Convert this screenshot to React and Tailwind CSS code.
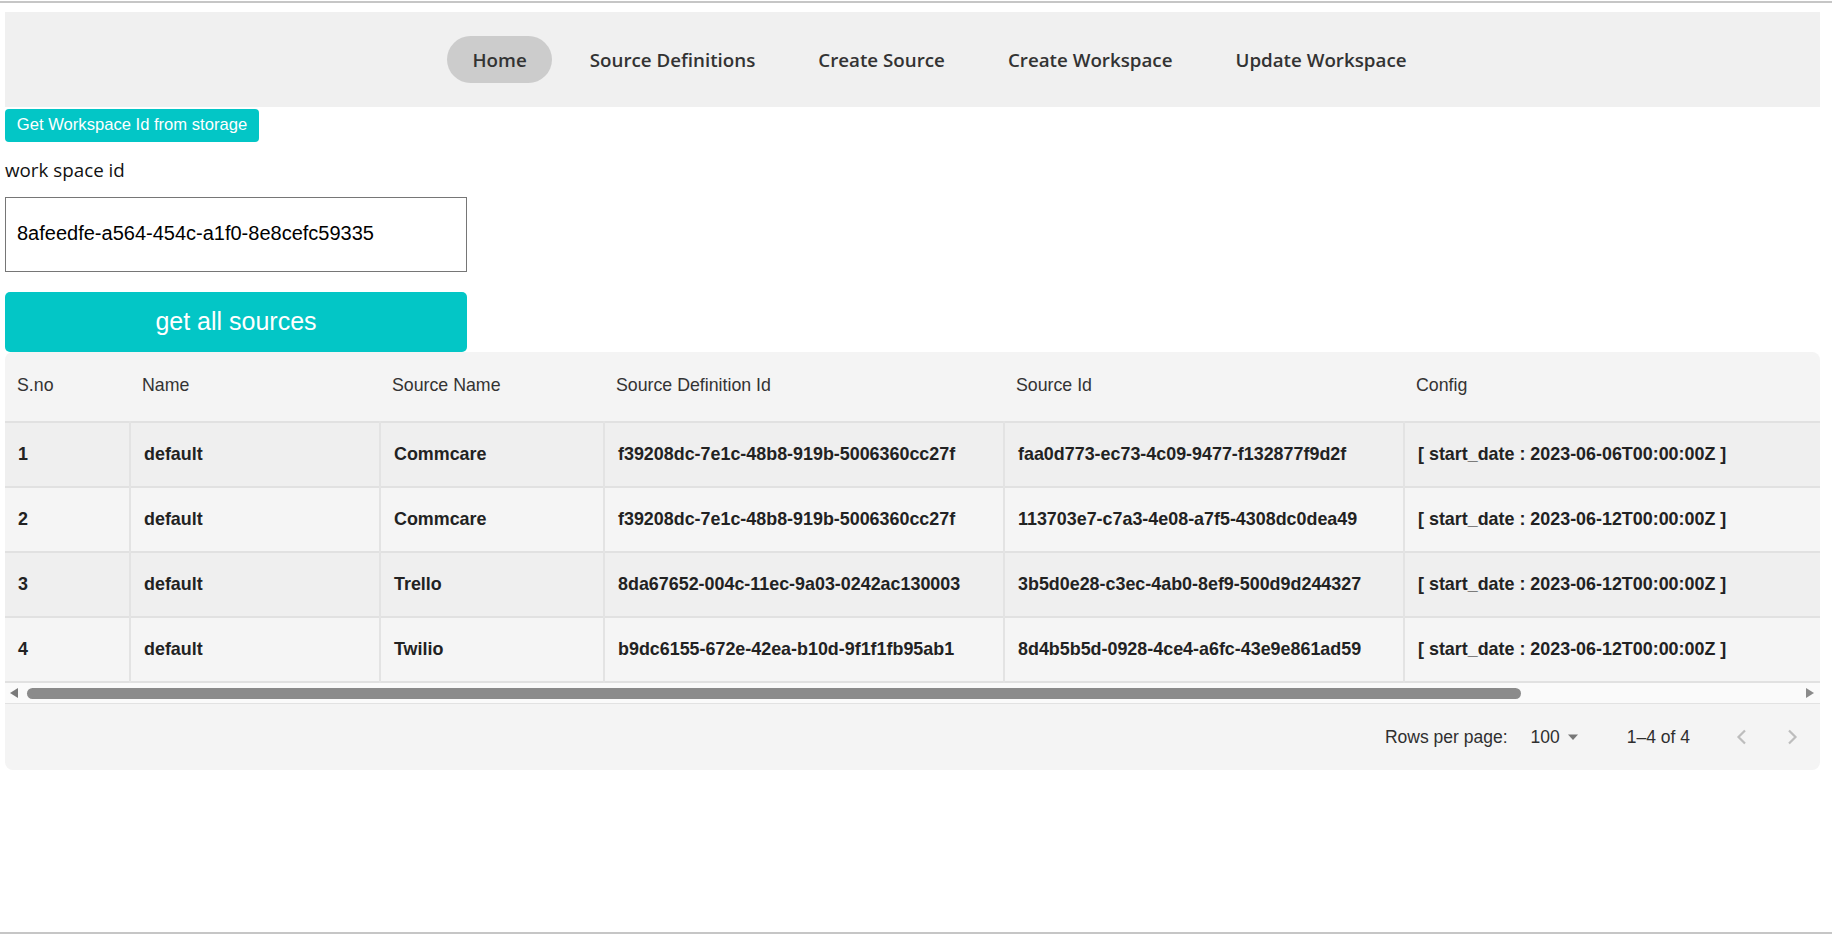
import React from 'react';

const navItems = ['Home', 'Source Definitions', 'Create Source', 'Create Workspace', 'Update Workspace'];

const sources = [
  {
    sno: 1,
    name: 'default',
    sourceName: 'Commcare',
    definitionId: 'f39208dc-7e1c-48b8-919b-5006360cc27f',
    sourceId: 'faa0d773-ec73-4c09-9477-f132877f9d2f',
    config: '[ start_date : 2023-06-06T00:00:00Z ]',
  },
  {
    sno: 2,
    name: 'default',
    sourceName: 'Commcare',
    definitionId: 'f39208dc-7e1c-48b8-919b-5006360cc27f',
    sourceId: '113703e7-c7a3-4e08-a7f5-4308dc0dea49',
    config: '[ start_date : 2023-06-12T00:00:00Z ]',
  },
  {
    sno: 3,
    name: 'default',
    sourceName: 'Trello',
    definitionId: '8da67652-004c-11ec-9a03-0242ac130003',
    sourceId: '3b5d0e28-c3ec-4ab0-8ef9-500d9d244327',
    config: '[ start_date : 2023-06-12T00:00:00Z ]',
  },
  {
    sno: 4,
    name: 'default',
    sourceName: 'Twilio',
    definitionId: 'b9dc6155-672e-42ea-b10d-9f1f1fb95ab1',
    sourceId: '8d4b5b5d-0928-4ce4-a6fc-43e9e861ad59',
    config: '[ start_date : 2023-06-12T00:00:00Z ]',
  },
];

const columns = [
  { key: 'sno', label: 'S.no', width: 'w-[125px]' },
  { key: 'name', label: 'Name', width: 'w-[250px]' },
  { key: 'sourceName', label: 'Source Name', width: 'w-[224px]' },
  { key: 'definitionId', label: 'Source Definition Id', width: 'w-[400px]' },
  { key: 'sourceId', label: 'Source Id', width: 'w-[400px]' },
  { key: 'config', label: 'Config', width: 'w-[761px]' },
];

const Navbar = () => (
  <nav className="mt-[9px] ml-[5px] w-[1815px] h-[95px] bg-[#f0f0f0] flex items-center justify-center gap-[13px] pl-[54px]">
    {navItems.map((item, i) => (
      <button
        key={item}
        className={
          'h-[47px] px-[25px] pt-[2px] rounded-full text-[18.75px] font-semibold text-[#333] ' +
          (i === 0 ? 'bg-[#cccccc]' : '')
        }
        style={{ fontFamily: '"Open Sans", sans-serif' }}
      >
        {item}
      </button>
    ))}
  </nav>
);

const ScrollBar = () => (
  <div className="h-[21px] bg-[#fafafa] border-b border-[#e2e2e2] flex items-center">
    <div className="ml-[5px] w-0 h-0 border-y-[5px] border-y-transparent border-r-[8px] border-r-[#7a7a7a]" />
    <div className="ml-[9px] w-[1494px] h-[11px] rounded-full bg-[#8b8b8b]" />
    <div className="ml-auto mr-[6px] w-0 h-0 border-y-[5px] border-y-transparent border-l-[8px] border-l-[#8a8a8a]" />
  </div>
);

const Pagination = () => (
  <div className="h-[66px] flex items-center justify-end text-[17.5px] text-[#2f2f2f]">
    <span>Rows per page:</span>
    <span className="ml-[23px]">100</span>
    <svg className="ml-[7px] w-[12px] h-[8px]" viewBox="0 0 12 8">
      <path d="M1 1.5 L11 1.5 L6 7 Z" fill="#777" />
    </svg>
    <span className="ml-[48px]">1–4 of 4</span>
    <svg className="ml-[40px] w-[24px] h-[24px]" viewBox="0 0 24 24" fill="none" stroke="#bdbdbd" strokeWidth="2.2">
      <path d="M15 5.5 L8.5 12 L15 18.5" />
    </svg>
    <svg className="ml-[26px] mr-[16px] w-[24px] h-[24px]" viewBox="0 0 24 24" fill="none" stroke="#bdbdbd" strokeWidth="2.2">
      <path d="M9 5.5 L15.5 12 L9 18.5" />
    </svg>
  </div>
);

const SourcesTable = () => (
  <div className="ml-[5px] w-[1815px] bg-[#f4f4f4] rounded-[8px] overflow-hidden">
    <div className="overflow-hidden">
      <table className="table-fixed w-[2160px] border-collapse">
        <colgroup>
          {columns.map(c => (
            <col key={c.key} className={c.width} />
          ))}
        </colgroup>
        <thead>
          <tr className="h-[70px] border-b-2 border-[#e1e1e1]">
            {columns.map(c => (
              <th key={c.key} className="text-left font-normal text-[17.75px] text-[#333] pl-[12px] pb-[2px]">
                {c.label}
              </th>
            ))}
          </tr>
        </thead>
        <tbody>
          {sources.map((row, i) => (
            <tr
              key={row.sno}
              className={
                'h-[65px] border-b-2 border-[#e1e1e1] ' + (i % 2 === 0 ? 'bg-[#efefef]' : 'bg-[#f5f5f5]')
              }
            >
              {columns.map((c, j) => (
                <td
                  key={c.key}
                  className={
                    'pl-[13px] text-[17.9px] font-bold text-[#222] whitespace-nowrap ' +
                    (j > 0 ? 'border-l-2 border-[#e3e3e3]' : '')
                  }
                >
                  {row[c.key]}
                </td>
              ))}
            </tr>
          ))}
        </tbody>
      </table>
    </div>
    <ScrollBar />
    <Pagination />
  </div>
);

export default function App() {
  return (
    <div
      className="w-[1832px] h-[936px] bg-white flex flex-col overflow-hidden"
      style={{ fontFamily: '"Liberation Sans", Arial, sans-serif' }}
    >
      <div className="mt-[1px] h-[2px] bg-[#c6c6c6]" />
      <Navbar />

      <button className="mt-[2px] ml-[5px] w-[254px] h-[33px] bg-[#03c6c6] text-white text-[16.6px] rounded-[4px]">
        Get Workspace Id from storage
      </button>

      <label
        className="mt-[16px] ml-[5px] text-[18.8px] leading-[24px] text-[#111]"
        style={{ fontFamily: '"Open Sans", sans-serif' }}
      >
        work space id
      </label>

      <input
        className="mt-[15px] ml-[5px] w-[462px] h-[75px] border border-[#767676] px-[11px] pb-[3px] text-[20px] text-black outline-none"
        defaultValue="8afeedfe-a564-454c-a1f0-8e8cefc59335"
      />

      <button className="mt-[20px] ml-[5px] w-[462px] h-[60px] bg-[#03c6c6] text-white text-[25px] rounded-[5px]">
        get all sources
      </button>

      <SourcesTable />

      <div className="flex-1" />
      <div className="h-[2px] mb-[2px] bg-[#c6c6c6]" />
    </div>
  );
}
